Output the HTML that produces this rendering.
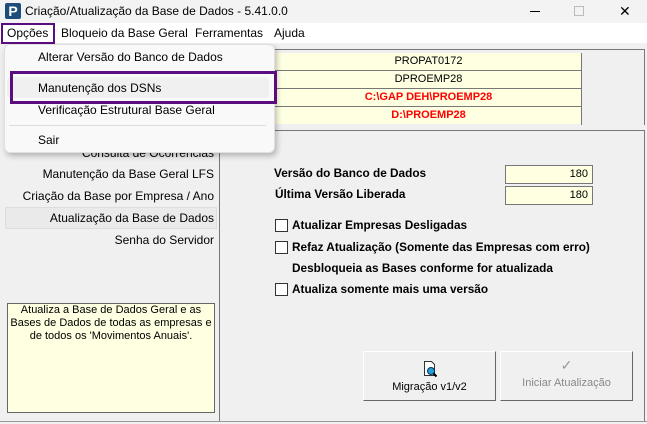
<!DOCTYPE html>
<html><head><style>
body{margin:0;width:647px;height:424px;background:#f0f0f0;font-family:"Liberation Sans",sans-serif;position:relative;overflow:hidden}
.a{position:absolute;white-space:nowrap}
.t{font-size:12px;color:#000}
.b{font-size:11.8px;font-weight:bold;color:#000}
.cb{position:absolute;width:11px;height:11px;border:1px solid #333;background:#fff}
.row{position:absolute;left:222px;width:359px;height:17px;border-bottom:1px solid #777;background:#ffffe1;font-size:11px;line-height:17px}
.row span{position:absolute;left:54px;width:305px;text-align:center}
</style></head><body>
<div class="a" style="left:0;top:0;width:647px;height:23px;background:#f3f3f3"></div>
<div class="a" style="left:5px;top:3px;width:16px;height:16px;background:#1e4d7b;border-radius:2px;color:#fff;font-weight:bold;font-size:14px;line-height:16px;text-align:center">P</div>
<div class="a t" style="left:25px;top:4px">Criação/Atualização da Base de Dados - 5.41.0.0</div>
<div class="a" style="left:530px;top:11px;width:10px;height:1px;background:#000"></div>
<div class="a" style="left:574px;top:6px;width:8px;height:8px;border:1px solid #bbb"></div>
<div class="a" style="left:619px;top:3px;font-size:14px">✕</div>
<div class="a" style="left:0;top:23px;width:647px;height:20px;background:#fff"></div>
<div class="a" style="left:1px;top:23px;width:50px;height:17px;border:2px solid #5b0c7e"></div>
<div class="a t" style="left:7px;top:26px">Opções</div>
<div class="a t" style="left:61px;top:26px">Bloqueio da Base Geral</div>
<div class="a t" style="left:195px;top:26px">Ferramentas</div>
<div class="a t" style="left:274px;top:26px">Ajuda</div>
<!-- top group -->
<div class="a" style="left:219px;top:49px;width:424px;height:75px;border:1px solid #777;border-bottom:none"></div>
<div class="a" style="left:221px;top:53px;width:360px;height:72px;border-right:1px solid #777"></div>
<div class="row" style="top:53px"><span>PROPAT0172</span></div>
<div class="row" style="top:71px"><span>DPROEMP28</span></div>
<div class="row" style="top:89px;color:#f00;font-weight:bold"><span>C:\GAP DEH\PROEMP28</span></div>
<div class="row" style="top:107px;color:#f00;font-weight:bold;border-bottom:none"><span>D:\PROEMP28</span></div>
<!-- lower group -->
<div class="a" style="left:219px;top:130px;width:424px;height:290px;border:1px solid #777"></div>
<div class="a" style="left:0;top:421px;width:647px;height:1px;background:#999"></div>
<div class="a t" style="right:433px;top:146px">Consulta de Ocorrências</div>
<div class="a t" style="right:433px;top:167px">Manutenção da Base Geral LFS</div>
<div class="a t" style="right:433px;top:189px">Criação da Base por Empresa / Ano</div>
<div class="a" style="left:5px;top:207px;width:210px;height:20px;border:1px solid #ddd;background:#eaeaea"></div>
<div class="a t" style="right:433px;top:211px">Atualização da Base de Dados</div>
<div class="a t" style="right:433px;top:233px">Senha do Servidor</div>
<div class="a" style="left:7px;top:303px;width:206px;height:108px;border:1px solid #666;background:#ffffe1;font-size:11px;text-align:center;line-height:13px;white-space:normal">Atualiza a Base de Dados Geral e as Bases de Dados de todas as empresas e de todos os 'Movimentos Anuais'.</div>
<div class="a b" style="left:274px;top:166px">Versão do Banco de Dados</div>
<div class="a b" style="left:275px;top:187px">Última Versão Liberada</div>
<div class="a" style="left:505px;top:165px;width:86px;height:17px;border:1px solid #777;background:#ffffe1;font-size:11px;text-align:right;line-height:17px"><span style="padding-right:4px">180</span></div>
<div class="a" style="left:505px;top:186px;width:86px;height:17px;border:1px solid #777;background:#ffffe1;font-size:11px;text-align:right;line-height:17px"><span style="padding-right:4px">180</span></div>
<div class="cb" style="left:275px;top:219px"></div><div class="a b" style="left:292px;top:218px">Atualizar Empresas Desligadas</div>
<div class="cb" style="left:275px;top:241px"></div><div class="a b" style="left:292px;top:240px">Refaz Atualização (Somente das Empresas com erro)</div>
<div class="a b" style="left:292px;top:261px">Desbloqueia as Bases conforme for atualizada</div>
<div class="cb" style="left:275px;top:283px"></div><div class="a b" style="left:292px;top:282px">Atualiza somente mais uma versão</div>
<div class="a" style="left:363px;top:351px;width:131px;height:48px;border:1px solid;border-color:#fff #666 #666 #fff;font-size:11px;text-align:center">
<svg width="16" height="18" style="display:block;margin:8px auto 0" viewBox="0 0 16 18"><path d="M2.5 1.5h7l3 3v11h-10z" fill="#fff" stroke="#333"/><circle cx="9" cy="11" r="3.5" fill="#2a9fd6" stroke="#036"/><path d="M11.5 13.5l3 3" stroke="#000" stroke-width="2"/></svg>
<div style="margin-top:3px">Migração v1/v2</div></div>
<div class="a" style="left:500px;top:351px;width:131px;height:48px;border:1px solid;border-color:#fff #666 #666 #fff;font-size:11px;text-align:center;color:#888">
<div style="margin-top:5px;font-size:14px;color:#999">✓</div>
<div style="margin-top:3px">Iniciar Atualização</div></div>
<!-- dropdown -->
<div class="a" style="left:4px;top:44px;width:269px;height:107px;background:#f9f9f9;border:1px solid #e0e0e0;border-radius:6px;box-shadow:2px 3px 6px rgba(0,0,0,.25)"></div>
<div class="a t" style="left:38px;top:50px">Alterar Versão do Banco de Dados</div>
<div class="a" style="left:7px;top:77px;width:262px;height:21px;background:#f0f0f0;border-radius:3px"></div>
<div class="a" style="left:10px;top:71px;width:261px;height:27px;border:3px solid #5b0c7e"></div>
<div class="a t" style="left:38px;top:81px">Manutenção dos DSNs</div>
<div class="a t" style="left:38px;top:103px">Verificação Estrutural Base Geral</div>
<div class="a" style="left:9px;top:125px;width:257px;height:1px;background:#ddd"></div>
<div class="a t" style="left:38px;top:133px">Sair</div>
</body></html>
